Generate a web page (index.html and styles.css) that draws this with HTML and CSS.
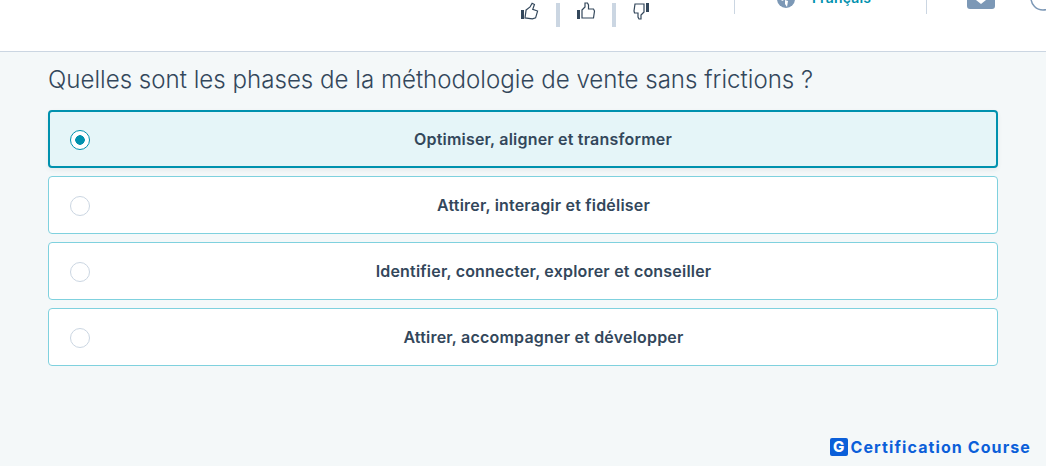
FILE: index.html
```html
<!DOCTYPE html>
<html lang="fr">
<head>
  <meta charset="UTF-8">
  <meta name="viewport" content="width=device-width, initial-scale=1.0">
  <title>Quiz</title>
  <link rel="stylesheet" href="styles.css">
</head>
<body>
  <header class="topbar">
    <div class="rating">
      <svg class="thumb" viewBox="0 0 20 18" width="20" height="18"><rect x="1" y="8" width="3" height="9" fill="#33475b"/><path d="M6 8.500 9.500 5 11 1l2.500 1-1 5 5 1-1 7-3 1.500H6z" fill="none" stroke="#33475b" stroke-width="1.2" transform="rotate(8 10 9)"/></svg>
      <span class="rating-sep"></span>
      <svg class="thumb" viewBox="0 0 20 18" width="20" height="18"><rect x="1" y="8" width="3" height="9" fill="#33475b"/><path d="M6 8 9 5V1h2.500l1 2v4h5l1 2-1 7H6z" fill="none" stroke="#33475b" stroke-width="1.2"/></svg>
      <span class="rating-sep"></span>
      <svg class="thumb" viewBox="0 0 20 18" width="20" height="18"><rect x="14" y="1" width="3" height="9" fill="#33475b"/><path d="M12 10 9 13v4H7l-1-2v-4H2.500L2 9l1-7h9z" fill="none" stroke="#33475b" stroke-width="1.2"/></svg>
    </div>
    <div class="lang">
      <svg class="globe" viewBox="0 0 18 18" width="18" height="18"><circle cx="9" cy="9" r="9" fill="#7c98b6"/><path d="M8 10l3 1-1 6-2-3zM3 8l3-1 1 3-2 1z" fill="#fff"/></svg>
      <span class="lang-name">Français</span>
      <span class="lang-caret">▾</span>
    </div>
    <div class="tools">
      <svg class="tray" viewBox="0 0 28 9" width="28" height="9"><path d="M0 0h9l5 4 5-4h9v6q0 3-3 3H3q-3 0-3-3z" fill="#7c98b6"/></svg>
      <svg class="clock" viewBox="0 0 20 12" width="20" height="12"><circle cx="13" cy="-2" r="12" fill="none" stroke="#7c98b6" stroke-width="1.5"/></svg>
    </div>
  </header>

  <main class="quiz">
    <h1 class="question">Quelles sont les phases de la méthodologie de vente sans frictions ?</h1>
    <div class="options">
      <label class="option option-selected">
        <span class="radio"></span>
        <span class="option-text">Optimiser, aligner et transformer</span>
      </label>
      <label class="option">
        <span class="radio"></span>
        <span class="option-text">Attirer, interagir et fidéliser</span>
      </label>
      <label class="option">
        <span class="radio"></span>
        <span class="option-text">Identifier, connecter, explorer et conseiller</span>
      </label>
      <label class="option">
        <span class="radio"></span>
        <span class="option-text">Attirer, accompagner et développer</span>
      </label>
    </div>
  </main>

  <footer class="brand">
    <span class="brand-logo">G</span>
    <span class="brand-name">Certification Course</span>
  </footer>
</body>
</html>
```

FILE: styles.css
```css
html, body {
  margin: 0;
  height: 100%;
}

body {
  display: flex;
  flex-direction: column;
  height: 466px;
  overflow: hidden;
  background: #f4f8f9;
  color: #33475b;
  font-family: 'Inter', sans-serif;
}

.topbar {
  display: flex;
  align-items: flex-start;
  flex: none;
  height: 51px;
  padding-left: 520px;
  background: #fff;
  border-bottom: 1px solid #cbd6e2;
  overflow: hidden;
}

.rating {
  display: flex;
  flex: none;
  align-items: flex-start;
  width: 214px;
}

.thumb {
  margin-top: 2px;
}

.rating-sep {
  width: 4px;
  height: 24px;
  margin: 3px 16px 0;
  background: #cbd6e2;
}

.lang {
  display: flex;
  flex: none;
  align-items: flex-start;
  width: 192px;
  height: 14px;
  padding-left: 42px;
  border-left: 1px solid #cbd6e2;
  box-sizing: border-box;
}

.globe {
  margin-top: -10px;
}

.lang-name {
  margin: -11px 0 0 17px;
  font-size: 14px;
  line-height: 17px;
  font-weight: 600;
  letter-spacing: 0.2px;
  color: #0091ae;
}

.lang-caret {
  margin: -8px 0 0 5px;
  font-size: 8px;
  color: #0091ae;
}

.tools {
  display: flex;
  flex: none;
  align-items: flex-start;
  gap: 35px;
  height: 14px;
  padding-left: 40px;
  border-left: 1px solid #cbd6e2;
}

.quiz {
  padding: 0 48px;
}

.question {
  margin: 12px 0 14px;
  font-size: 24.1px;
  line-height: 32px;
  font-weight: 300;
  color: #33475b;
}

.options {
  display: flex;
  flex-direction: column;
  gap: 8px;
}

.option {
  display: flex;
  align-items: center;
  height: 58px;
  padding-left: 21px;
  box-sizing: border-box;
  background: #fff;
  border: 1px solid #7fd1de;
  border-radius: 4px;
}

.option-selected {
  padding-left: 20px;
  background: #e5f5f8;
  border: 2px solid #0091ae;
  box-shadow: 0 2px 4px rgba(51, 71, 91, 0.08);
}

.radio {
  flex: none;
  width: 20px;
  height: 20px;
  margin-top: 2px;
  box-sizing: border-box;
  background: #fff;
  border: 1px solid #cbd6e2;
  border-radius: 50%;
}

.option-selected .radio {
  border-color: #0091ae;
  background: radial-gradient(circle, #0091ae 0 4.5px, #fff 5px);
}

.option-text {
  flex: 1;
  text-align: center;
  font-size: 16px;
  font-weight: 600;
  letter-spacing: 0.2px;
  color: #33475b;
}

.brand {
  display: flex;
  align-items: center;
  justify-content: flex-end;
  gap: 3px;
  margin-top: auto;
  padding: 0 15px 9px 0;
}

.brand-logo {
  width: 18px;
  height: 18px;
  background: #0b5fd9;
  border-radius: 2px;
  color: #fff;
  font-size: 15px;
  font-weight: 800;
  line-height: 18px;
  text-align: center;
}

.brand-name {
  font-size: 16px;
  font-weight: 700;
  letter-spacing: 1.1px;
  color: #0b5fd9;
}
```
